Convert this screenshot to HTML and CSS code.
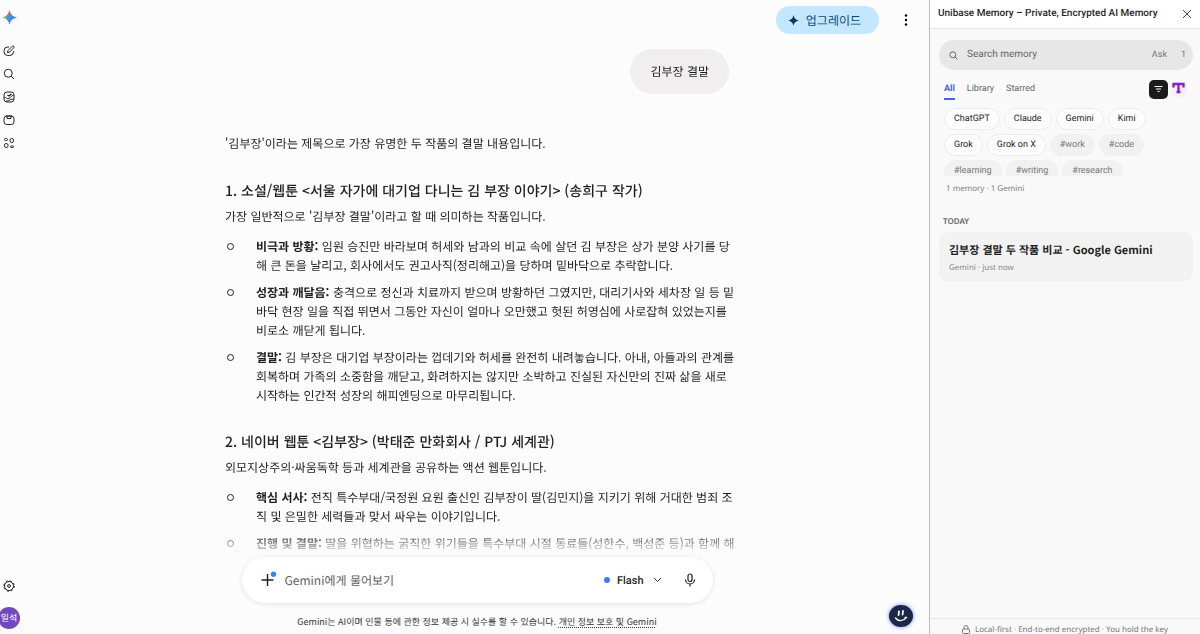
FILE: index.html
```html
<!DOCTYPE html>
<html lang="ko">
<head>
  <meta charset="utf-8">
  <title>Google Gemini</title>
  <link rel="stylesheet" href="styles.css">
</head>
<body>
  <nav class="rail">
    <a class="rail-logo" href="#" aria-label="Gemini">
      <svg width="15" height="15" viewBox="0 0 24 24">
        <defs>
          <linearGradient id="spark" x1="0" y1="0.3" x2="1" y2="0.6">
            <stop offset="0" stop-color="#f8c020"/>
            <stop offset="0.3" stop-color="#4fb878"/>
            <stop offset="0.5" stop-color="#3f8cf0"/>
            <stop offset="1" stop-color="#3b7df5"/>
          </linearGradient>
          <linearGradient id="sparkTop" x1="0" y1="0" x2="0" y2="1">
            <stop offset="0" stop-color="#f04a4a"/>
            <stop offset="0.2" stop-color="#ea5560"/>
            <stop offset="0.45" stop-color="#ea5560" stop-opacity="0"/>
          </linearGradient>
        </defs>
        <path fill="url(#spark)" d="M12 0c1.300 7 5 10.700 12 12-7 1.300-10.700 5-12 12-1.300-7-5-10.700-12-12 7-1.300 10.700-5 12-12z"/>
        <path fill="url(#sparkTop)" d="M12 0c1.300 7 5 10.700 12 12-7 1.300-10.700 5-12 12-1.300-7-5-10.700-12-12 7-1.300 10.700-5 12-12z"/>
      </svg>
    </a>
    <button class="rail-btn" aria-label="새 채팅">
      <svg viewBox="0 0 24 24"><path d="M12 4H9.500A7.500 7.500 0 0 0 2 11.500v2A7.500 7.500 0 0 0 9.500 21h4a7.500 7.500 0 0 0 7.500-7.500V12"/><path d="M9 15.500l1-4.500 8.500-8.500a2 2 0 0 1 3 3L13.500 14z"/></svg>
    </button>
    <button class="rail-btn" aria-label="검색">
      <svg viewBox="0 0 24 24"><circle cx="10.500" cy="10.500" r="8"/><path d="M16.500 16.500l5.500 5.500"/></svg>
    </button>
    <button class="rail-btn" aria-label="이미지">
      <svg viewBox="0 0 24 24"><rect x="2" y="2" width="20" height="20" rx="6"/><path d="M3 13c3-1 5 4 9 2s5-7 9-6M6 20c5 1 6-3 15-4"/><path d="M9 8l3 2 5-4" stroke-width="2.600"/></svg>
    </button>
    <button class="rail-btn" aria-label="라이브러리">
      <svg viewBox="0 0 24 24"><rect x="2" y="4" width="20" height="17" rx="5.500"/><path d="M8 4v5h8V4M6 4h12"/></svg>
    </button>
    <button class="rail-btn" aria-label="앱">
      <svg viewBox="0 0 24 24"><rect x="3" y="3" width="6" height="4" rx="2"/><rect x="14" y="3" width="7" height="8" rx="3.200"/><rect x="3" y="13" width="7" height="8" rx="3.200"/><rect x="15" y="18" width="6" height="3" rx="1.500"/></svg>
    </button>
    <div class="rail-bottom">
      <button class="rail-btn" aria-label="설정">
        <svg viewBox="0 0 24 24"><circle cx="12" cy="12" r="9"/><circle cx="12" cy="12" r="2.800"/><circle cx="12" cy="12" r="10.500" stroke-dasharray="4.100 4.150"/></svg>
      </button>
      <button class="avatar">일석</button>
    </div>
  </nav>

  <main class="main">
    <header class="topbar">
      <button class="upgrade">
        <svg width="11" height="11" viewBox="0 0 24 24"><path fill="#04395e" d="M12 0c1.600 7.500 4.500 10.400 12 12-7.500 1.600-10.400 4.500-12 12-1.600-7.500-4.500-10.400-12-12 7.500-1.600 10.400-4.500 12-12z"/></svg>
        업그레이드
      </button>
      <button class="more" aria-label="더보기">
        <svg width="4" height="12" viewBox="0 0 4 12"><circle cx="2" cy="1.500" r="1.200"/><circle cx="2" cy="6" r="1.200"/><circle cx="2" cy="10.500" r="1.200"/></svg>
      </button>
    </header>

    <div class="chat">
      <div class="column">
        <div class="bubble">김부장 결말</div>
        <div class="answer">
          <p class="intro">'김부장'이라는 제목으로 가장 유명한 두 작품의 결말 내용입니다.</p>
          <h3>1. 소설/웹툰 &lt;서울 자가에 대기업 다니는 김 부장 이야기&gt; (송희구 작가)</h3>
          <p>가장 일반적으로 '김부장 결말'이라고 할 때 의미하는 작품입니다.</p>
          <ul>
            <li><b>비극과 방황:</b> 임원 승진만 바라보며 허세와 남과의 비교 속에 살던 김 부장은 상가 분양 사기를 당<br>해 큰 돈을 날리고, 회사에서도 권고사직(정리해고)을 당하며 밑바닥으로 추락합니다.</li>
            <li><b>성장과 깨달음:</b> 충격으로 정신과 치료까지 받으며 방황하던 그였지만, 대리기사와 세차장 일 등 밑<br>바닥 현장 일을 직접 뛰면서 그동안 자신이 얼마나 오만했고 헛된 허영심에 사로잡혀 있었는지를<br>비로소 깨닫게 됩니다.</li>
            <li><b>결말:</b> 김 부장은 대기업 부장이라는 껍데기와 허세를 완전히 내려놓습니다. 아내, 아들과의 관계를<br>회복하며 가족의 소중함을 깨닫고, 화려하지는 않지만 소박하고 진실된 자신만의 진짜 삶을 새로<br>시작하는 인간적 성장의 해피엔딩으로 마무리됩니다.</li>
          </ul>
          <h3>2. 네이버 웹툰 &lt;김부장&gt; (박태준 만화회사 / PTJ 세계관)</h3>
          <p>외모지상주의·싸움독학 등과 세계관을 공유하는 액션 웹툰입니다.</p>
          <ul>
            <li><b>핵심 서사:</b> 전직 특수부대/국정원 요원 출신인 김부장이 딸(김민지)을 지키기 위해 거대한 범죄 조<br>직 및 은밀한 세력들과 맞서 싸우는 이야기입니다.</li>
            <li><b>진행 및 결말:</b> 딸을 위협하는 굵직한 위기들을 특수부대 시절 동료들(성한수, 백성준 등)과 함께 해</li>
          </ul>
        </div>
      </div>
    </div>

    <footer class="bottom">
      <form class="composer">
        <button type="button" class="add" aria-label="추가">
          <svg width="18" height="18" viewBox="0 0 18 18"><path d="M7.500 3v12M1.500 9h12" stroke="#1f1f1f" stroke-width="1.400" fill="none"/><circle cx="13.500" cy="3.200" r="2.700" fill="#3b82f6"/></svg>
        </button>
        <input class="prompt" type="text" placeholder="Gemini에게 물어보기" aria-label="Gemini에게 물어보기">
        <button type="button" class="model">
          <span class="model-dot"></span>
          Flash
          <svg width="9" height="6" viewBox="0 0 9 6"><path d="M1 1l3.500 3.500L8 1" fill="none" stroke="#333"/></svg>
        </button>
        <button type="button" class="mic" aria-label="마이크">
          <svg width="12" height="14" viewBox="0 0 12 14" fill="none" stroke="#1f1f1f" stroke-width="1.200"><rect x="4" y="1" width="4" height="7.500" rx="2"/><path d="M1.500 6.500a4.500 4.500 0 0 0 9 0M6 11v2.500"/></svg>
        </button>
      </form>
      <p class="disclaimer">Gemini는 AI이며 인물 등에 관한 정보 제공 시 실수를 할 수 있습니다. <a href="#">개인 정보 보호 및 Gemini</a></p>
    </footer>

    <button class="assistant" aria-label="Assistant">
      <svg width="24" height="22" viewBox="0 0 24 22" fill="none" stroke="#fff" stroke-linecap="round"><path d="M10 6.500l-.4 3.500M14 6l-.4 3.500" stroke-width="1.800"/><path d="M6.500 13c2.500 3.500 8 3.300 10.500-.2M16 12.300l1.600.2" stroke-width="1.300"/></svg>
    </button>
  </main>

  <aside class="panel">
    <header class="panel-header">
      <h2>Unibase Memory – Private, Encrypted AI Memory</h2>
      <button class="close" aria-label="Close">
        <svg width="10" height="10" viewBox="0 0 10 10"><path d="M1 1l8 8M9 1L1 9" stroke="#444"/></svg>
      </button>
    </header>
    <div class="panel-body">
      <div class="search">
        <svg width="9" height="9" viewBox="0 0 9 9" fill="none" stroke="#666"><circle cx="3.800" cy="3.800" r="3"/><path d="M6 6l2.500 2.500"/></svg>
        <input type="text" placeholder="Search memory" aria-label="Search memory">
        <button class="ask">Ask</button>
        <span class="count">1</span>
      </div>
      <div class="tabs">
        <button class="tab active">All</button>
        <button class="tab">Library</button>
        <button class="tab">Starred</button>
        <button class="filter" aria-label="Filter">
          <svg width="9" height="8" viewBox="0 0 9 8" stroke="#fff"><path d="M.5 1.500h8M2 4h5M3.500 6.500h2"/></svg>
        </button>
        <button class="brand" aria-label="Unibase">
          <svg width="17" height="17" viewBox="0 0 17 17"><circle cx="8.500" cy="8.500" r="8.500" fill="#f2f2f3"/><path d="M3.500 6.500V3h10v3.500M8.500 3v9M6.500 11h4" fill="none" stroke="#8a20d0" stroke-width="2.300"/></svg>
        </button>
      </div>
      <div class="chips">
        <button class="chip">ChatGPT</button>
        <button class="chip">Claude</button>
        <button class="chip">Gemini</button>
        <button class="chip">Kimi</button>
        <button class="chip">Grok</button>
        <button class="chip">Grok on X</button>
        <button class="chip tag">#work</button>
        <button class="chip tag">#code</button>
        <button class="chip tag">#learning</button>
        <button class="chip tag">#writing</button>
        <button class="chip tag">#research</button>
      </div>
      <p class="summary">1 memory · 1 Gemini</p>
      <h4>TODAY</h4>
      <article class="card">
        <h5>김부장 결말 두 작품 비교 - Google Gemini</h5>
        <p>Gemini · just now</p>
      </article>
    </div>
    <footer class="panel-footer">
      <svg width="8" height="9" viewBox="0 0 8 9" fill="none" stroke="#777"><rect x=".5" y="4" width="7" height="4.500" rx="1"/><path d="M2 4V2.500a2 2 0 0 1 4 0V4"/></svg>
      Local-first · End-to-end encrypted · You hold the key
    </footer>
  </aside>
</body>
</html>
```
FILE: styles.css
```css
* {
  box-sizing: border-box;
}
body {
  margin: 0;
  display: flex;
  height: 100vh;
  overflow: hidden;
  background: #fcfcfc;
  color: #1f1f1f;
  font-family: "Noto Sans CJK KR", sans-serif;
  font-size: 12px;
  line-height: 19px;
  text-rendering: geometricPrecision;
}
button,
input {
  font: inherit;
  color: inherit;
  text-rendering: inherit;
  border: none;
  background: none;
  padding: 0;
  margin: 0;
}
button {
  cursor: pointer;
}
svg {
  display: block;
  flex-shrink: 0;
}
h2, h3, h4, h5, p, ul {
  margin: 0;
}

/* left rail */
.rail {
  width: 25px;
  flex-shrink: 0;
  display: flex;
  flex-direction: column;
  padding: 10px 0 5px 3px;
  gap: 11px;
}
.rail-logo {
  margin: 0 0 9px -1px;
}
.rail-btn {
  width: 12px;
  height: 12px;
}
.rail-btn svg {
  width: 12px;
  height: 12px;
  fill: none;
  stroke: #222;
  stroke-width: 2;
}
.rail-bottom {
  display: flex;
  flex-direction: column;
  gap: 15px;
  margin-top: auto;
}
.avatar {
  width: 22px;
  height: 22px;
  margin-left: -5px;
  border-radius: 50%;
  background: #7248bd;
  color: #fff;
  font-size: 9px;
  line-height: 22px;
}

/* conversation */
.main {
  position: relative;
  flex: 1;
  min-width: 0;
  display: flex;
  flex-direction: column;
}
.topbar {
  display: flex;
  justify-content: flex-end;
  align-items: center;
  height: 40px;
  flex-shrink: 0;
  gap: 25px;
  padding-right: 21px;
}
.upgrade {
  display: flex;
  align-items: center;
  gap: 7px;
  height: 28px;
  padding: 0 18px 0 12px;
  border-radius: 14px;
  background: #c2e7ff;
  color: #0b4a72;
}
.chat {
  flex: 1;
  min-height: 0;
  overflow: hidden;
  padding-top: 9px;
  -webkit-mask-image: linear-gradient(#000 calc(100% - 28px), transparent);
  mask-image: linear-gradient(#000 calc(100% - 28px), transparent);
}
.column {
  max-width: 504px;
  margin: 0 auto;
}
.bubble {
  width: fit-content;
  margin-left: auto;
  padding: 13px 20px;
  border-radius: 23px;
  background: #f0eeef;
}
.answer {
  padding-top: 40px;
}
.answer .intro {
  margin-bottom: 26px;
}
.answer h3 {
  margin: 25px 0 4px;
  font-size: 14px;
  font-weight: 500;
  line-height: 24px;
}
.answer ul {
  list-style: none;
  margin-top: 11px;
  padding: 0;
}
.answer li {
  position: relative;
  padding-left: 31px;
  margin-bottom: 8px;
  white-space: nowrap;
}
.answer li:last-child {
  margin-bottom: 0;
}
.answer li::before {
  content: "";
  position: absolute;
  left: 2px;
  top: 6px;
  width: 5px;
  height: 5px;
  border: 1px solid #1f1f1f;
  border-radius: 50%;
}
.bottom {
  flex-shrink: 0;
}
.composer {
  display: flex;
  align-items: center;
  max-width: 471px;
  height: 46px;
  margin: 0 auto;
  padding: 0 17px 0 18px;
  border-radius: 23px;
  background: #fff;
  box-shadow: 0 1px 5px rgba(0, 0, 0, 0.1);
}
.prompt {
  flex: 1;
  min-width: 0;
  margin-left: 7px;
  outline: none;
}
.prompt::placeholder {
  color: #5f6063;
}
.model {
  display: flex;
  align-items: center;
  font-family: Roboto, sans-serif;
  font-size: 11px;
  font-weight: 500;
}
.model svg {
  margin-left: 9px;
}
.model-dot {
  width: 6px;
  height: 6px;
  margin-right: 7px;
  border-radius: 50%;
  background: #3b7df5;
}
.mic {
  margin-left: 22px;
}
.disclaimer {
  padding: 9px 0 3px;
  text-align: center;
  font-size: 9px;
  color: #333;
}
.disclaimer a {
  color: inherit;
  text-decoration: underline dotted;
  text-underline-offset: 2px;
}
.assistant {
  position: absolute;
  right: 16px;
  bottom: 7px;
  width: 24px;
  height: 22px;
  border-radius: 50%;
  background: #1d2747;
  box-shadow: 0 0 4px #7b83e8;
}

/* memory panel */
.panel {
  width: 271px;
  flex-shrink: 0;
  display: flex;
  flex-direction: column;
  border-left: 1px solid #bdbdbd;
  background: #f9f9f9;
  font-family: Roboto, "Noto Sans CJK KR", sans-serif;
  font-size: 9px;
  line-height: 14px;
}
.panel-header {
  display: flex;
  align-items: center;
  justify-content: space-between;
  height: 29px;
  padding: 0 8px;
  border-bottom: 1px solid #e6e6e6;
  background: #fff;
}
.panel-header h2 {
  font-size: 10px;
  font-weight: 500;
}
.panel-body {
  flex: 1;
  min-height: 0;
  padding: 11px 7px 0 9px;
}
.search {
  display: flex;
  align-items: center;
  height: 30px;
  padding: 0 7px 0 10px;
  border-radius: 15px;
  background: #e7e7e7;
  color: #777;
}
.search input {
  flex: 1;
  min-width: 0;
  margin-left: 9px;
  font-size: 10px;
  outline: none;
}
.search input::placeholder {
  color: #666;
}
.count {
  margin-left: 14px;
}
.tabs {
  display: flex;
  align-items: center;
  gap: 12px;
  height: 38px;
  padding: 0 6px 0 5px;
}
.tab {
  height: 22px;
  padding-top: 1px;
  border-bottom: 2px solid transparent;
  color: #666;
}
.tab.active {
  border-color: #3f62f5;
  color: #3f62f5;
  font-weight: 700;
}
.filter {
  display: flex;
  align-items: center;
  justify-content: center;
  width: 19px;
  height: 19px;
  margin-left: auto;
  border-radius: 5px;
  background: #1b1b1b;
}
.brand {
  margin-left: -10px;
}
.chips {
  display: flex;
  flex-wrap: wrap;
  align-content: flex-start;
  gap: 4px;
  height: 68px;
  padding: 0 40px 0 5px;
  overflow: hidden;
}
.chip {
  height: 22px;
  padding: 0 9px;
  border: 1px solid #ececec;
  border-radius: 11px;
  background: #fcfcfc;
}
.chip.tag {
  border-color: #f1f1f1;
  background: #f1f1f1;
  color: #777;
}
.summary,
.panel-body h4,
.card p,
.panel-footer {
  font-family: "Noto Sans", sans-serif;
  font-size: 8px;
}
.summary {
  padding: 6px 0 0 7px;
  color: #808080;
}
.panel-body h4 {
  padding: 19px 0 3px 4px;
  font-weight: 600;
  color: #666;
}
.card {
  padding: 9px 10px 7px;
  border-radius: 10px;
  background: #f2f2f2;
}
.card h5 {
  font-family: "Noto Sans CJK KR", sans-serif;
  font-size: 11px;
  font-weight: 700;
  line-height: 18px;
}
.card p {
  margin-top: 2px;
  color: #888;
}
.panel-footer {
  display: flex;
  justify-content: center;
  gap: 5px;
  height: 16px;
  padding-top: 6px;
  border-top: 1px solid #e8e8e8;
  line-height: 10px;
  color: #777;
}
```
